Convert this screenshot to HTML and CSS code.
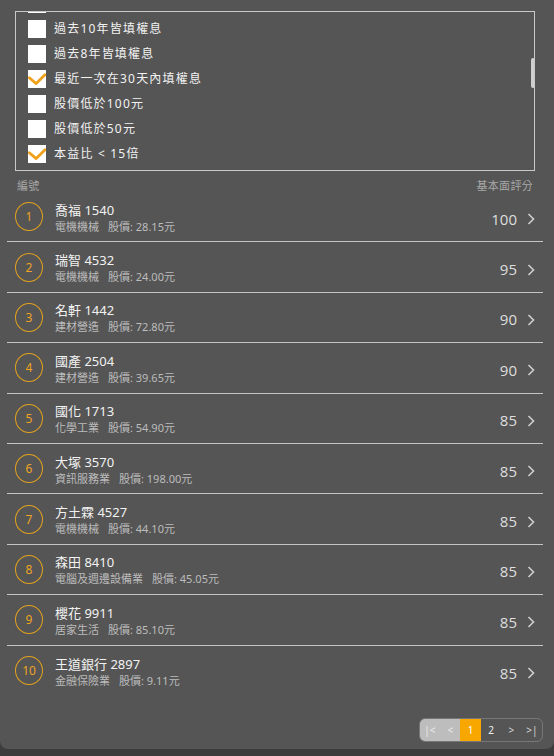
FILE: index.html
```html
<!DOCTYPE html>
<html lang="zh-Hant">
<head>
<meta charset="utf-8">
<title>選股結果</title>
<link rel="stylesheet" href="styles.css">
</head>
<body>
<div class="panel">
  <div class="filter">
    <ul class="filter-list">
      <li class="opt"><span class="box"></span></li>
      <li class="opt"><span class="box"></span><span class="lbl">過去10年皆填權息</span></li>
      <li class="opt"><span class="box"></span><span class="lbl">過去8年皆填權息</span></li>
      <li class="opt"><span class="box checked"><svg viewBox="0 0 18 18" width="18" height="18"><polyline points="1.3,7.7 8.2,13.6 17,4.8" fill="none" stroke="#f0a11c" stroke-width="2.8" stroke-linecap="round" stroke-linejoin="round"/></svg></span><span class="lbl">最近一次在30天內填權息</span></li>
      <li class="opt"><span class="box"></span><span class="lbl">股價低於100元</span></li>
      <li class="opt"><span class="box"></span><span class="lbl">股價低於50元</span></li>
      <li class="opt"><span class="box checked"><svg viewBox="0 0 18 18" width="18" height="18"><polyline points="1.3,7.7 8.2,13.6 17,4.8" fill="none" stroke="#f0a11c" stroke-width="2.8" stroke-linecap="round" stroke-linejoin="round"/></svg></span><span class="lbl">本益比 &lt; 15倍</span></li>
      <li class="opt"><span class="box"></span></li>
    </ul>
    <div class="thumb"></div>
  </div>

  <div class="head">
    <span>編號</span>
    <span>基本面評分</span>
  </div>

  <ul class="rows">
    <li class="row"><span class="rank">1</span><div class="info"><div class="name">喬福 1540</div><div class="sub"><span>電機機械</span><span>股價: 28.15元</span></div></div><span class="score">100</span><svg class="chev" viewBox="0 0 8 12" width="8" height="12"><polyline points="1.5,1 6.5,6 1.5,11" fill="none" stroke="#cfcfcf" stroke-width="1.6"/></svg></li>
    <li class="row"><span class="rank">2</span><div class="info"><div class="name">瑞智 4532</div><div class="sub"><span>電機機械</span><span>股價: 24.00元</span></div></div><span class="score">95</span><svg class="chev" viewBox="0 0 8 12" width="8" height="12"><polyline points="1.5,1 6.5,6 1.5,11" fill="none" stroke="#cfcfcf" stroke-width="1.6"/></svg></li>
    <li class="row"><span class="rank">3</span><div class="info"><div class="name">名軒 1442</div><div class="sub"><span>建材營造</span><span>股價: 72.80元</span></div></div><span class="score">90</span><svg class="chev" viewBox="0 0 8 12" width="8" height="12"><polyline points="1.5,1 6.5,6 1.5,11" fill="none" stroke="#cfcfcf" stroke-width="1.6"/></svg></li>
    <li class="row"><span class="rank">4</span><div class="info"><div class="name">國產 2504</div><div class="sub"><span>建材營造</span><span>股價: 39.65元</span></div></div><span class="score">90</span><svg class="chev" viewBox="0 0 8 12" width="8" height="12"><polyline points="1.5,1 6.5,6 1.5,11" fill="none" stroke="#cfcfcf" stroke-width="1.6"/></svg></li>
    <li class="row"><span class="rank">5</span><div class="info"><div class="name">國化 1713</div><div class="sub"><span>化學工業</span><span>股價: 54.90元</span></div></div><span class="score">85</span><svg class="chev" viewBox="0 0 8 12" width="8" height="12"><polyline points="1.5,1 6.5,6 1.5,11" fill="none" stroke="#cfcfcf" stroke-width="1.6"/></svg></li>
    <li class="row"><span class="rank">6</span><div class="info"><div class="name">大塚 3570</div><div class="sub"><span>資訊服務業</span><span>股價: 198.00元</span></div></div><span class="score">85</span><svg class="chev" viewBox="0 0 8 12" width="8" height="12"><polyline points="1.5,1 6.5,6 1.5,11" fill="none" stroke="#cfcfcf" stroke-width="1.6"/></svg></li>
    <li class="row"><span class="rank">7</span><div class="info"><div class="name">方土霖 4527</div><div class="sub"><span>電機機械</span><span>股價: 44.10元</span></div></div><span class="score">85</span><svg class="chev" viewBox="0 0 8 12" width="8" height="12"><polyline points="1.5,1 6.5,6 1.5,11" fill="none" stroke="#cfcfcf" stroke-width="1.6"/></svg></li>
    <li class="row"><span class="rank">8</span><div class="info"><div class="name">森田 8410</div><div class="sub"><span>電腦及週邊設備業</span><span>股價: 45.05元</span></div></div><span class="score">85</span><svg class="chev" viewBox="0 0 8 12" width="8" height="12"><polyline points="1.5,1 6.5,6 1.5,11" fill="none" stroke="#cfcfcf" stroke-width="1.6"/></svg></li>
    <li class="row"><span class="rank">9</span><div class="info"><div class="name">櫻花 9911</div><div class="sub"><span>居家生活</span><span>股價: 85.10元</span></div></div><span class="score">85</span><svg class="chev" viewBox="0 0 8 12" width="8" height="12"><polyline points="1.5,1 6.5,6 1.5,11" fill="none" stroke="#cfcfcf" stroke-width="1.6"/></svg></li>
    <li class="row"><span class="rank">10</span><div class="info"><div class="name">王道銀行 2897</div><div class="sub"><span>金融保險業</span><span>股價: 9.11元</span></div></div><span class="score">85</span><svg class="chev" viewBox="0 0 8 12" width="8" height="12"><polyline points="1.5,1 6.5,6 1.5,11" fill="none" stroke="#cfcfcf" stroke-width="1.6"/></svg></li>
  </ul>

  <div class="pager-wrap">
    <div class="pager">
      <span class="pg off">|&lt;</span>
      <span class="pg off">&lt;</span>
      <span class="pg cur">1</span>
      <span class="pg">2</span>
      <span class="pg arrow">&gt;</span>
      <span class="pg arrow">&gt;|</span>
    </div>
  </div>
</div>
</body>
</html>
```

FILE: styles.css
```css
* { box-sizing: border-box; }

html, body {
  margin: 0;
  padding: 0;
}

body {
  background: #3c3c3c;
  font-family: "Noto Sans", "Noto Sans CJK TC", sans-serif;
  color: #f0f0f0;
}

.panel {
  height: 749px;
  background: #555555;
  border-radius: 0 0 8px 8px;
  padding-top: 11px;
  overflow: hidden;
}

/* filter box */
.filter {
  position: relative;
  margin: 0 19px 0 15px;
  height: 160px;
  border: 1px solid #c9c9c9;
  overflow: hidden;
}

.filter-list {
  list-style: none;
  margin: -21px 0 0 0;
  padding: 0 0 0 12px;
}

.opt {
  display: flex;
  align-items: center;
  height: 25px;
}

.box {
  width: 18px;
  height: 18px;
  background: #ffffff;
  flex: none;
  display: block;
}

.box svg { display: block; }

.lbl {
  margin-left: 8px;
  font-size: 12px;
  line-height: 16px;
  letter-spacing: 1.2px;
  color: #f2f2f2;
  white-space: nowrap;
}

.thumb {
  position: absolute;
  right: -1px;
  top: 46px;
  width: 4px;
  height: 30px;
  border-radius: 2px;
  background: #cfcfcf;
}

/* header */
.head {
  display: flex;
  justify-content: space-between;
  padding: 9px 21px 0 17px;
  height: 21px;
  font-size: 11px;
  line-height: 12px;
  color: #a8a8a8;
  letter-spacing: 0.3px;
}

/* rows */
.rows {
  list-style: none;
  margin: 0 11px 0 7px;
  padding: 0;
}

.row {
  display: flex;
  align-items: center;
  height: 50.4px;
  border-bottom: 1px solid #c4c4c4;
  padding: 0 8px 0 8px;
}

.row:last-child { border-bottom: none; }

.rank {
  flex: none;
  width: 28px;
  height: 29px;
  border: 1.5px solid #e3a21e;
  border-radius: 50%;
  display: flex;
  align-items: center;
  justify-content: center;
  color: #eda423;
  font-size: 12px;
}

.info {
  flex: 1;
  margin-left: 12px;
  padding-top: 2px;
}

.name {
  font-size: 13px;
  line-height: 18px;
  color: #f2f2f2;
}

.sub {
  font-size: 11px;
  line-height: 16px;
  color: #bcbcbc;
  display: flex;
  gap: 9px;
}

.score {
  font-family: "Open Sans", "Noto Sans", sans-serif;
  font-size: 15px;
  color: #dedede;
  padding-top: 4px;
  margin-right: 10px;
}

.chev {
  flex: none;
  display: block;
  margin-top: 5px;
}

/* pager */
.pager-wrap {
  display: flex;
  justify-content: flex-end;
  padding: 22px 11px 0 0;
}

.pager {
  display: flex;
  height: 24px;
  border: 1px solid #777777;
  border-radius: 6px;
  overflow: hidden;
}

.pg {
  width: 20.4px;
  display: flex;
  align-items: center;
  justify-content: center;
  font-size: 10px;
  color: #eeeeee;
}

.pg.off {
  background: #bdbdbd;
  color: #ececec;
}

.pg.cur {
  background: #f7a700;
  color: #ffffff;
}

.pg.arrow {
  color: #d8d8d8;
}
```
